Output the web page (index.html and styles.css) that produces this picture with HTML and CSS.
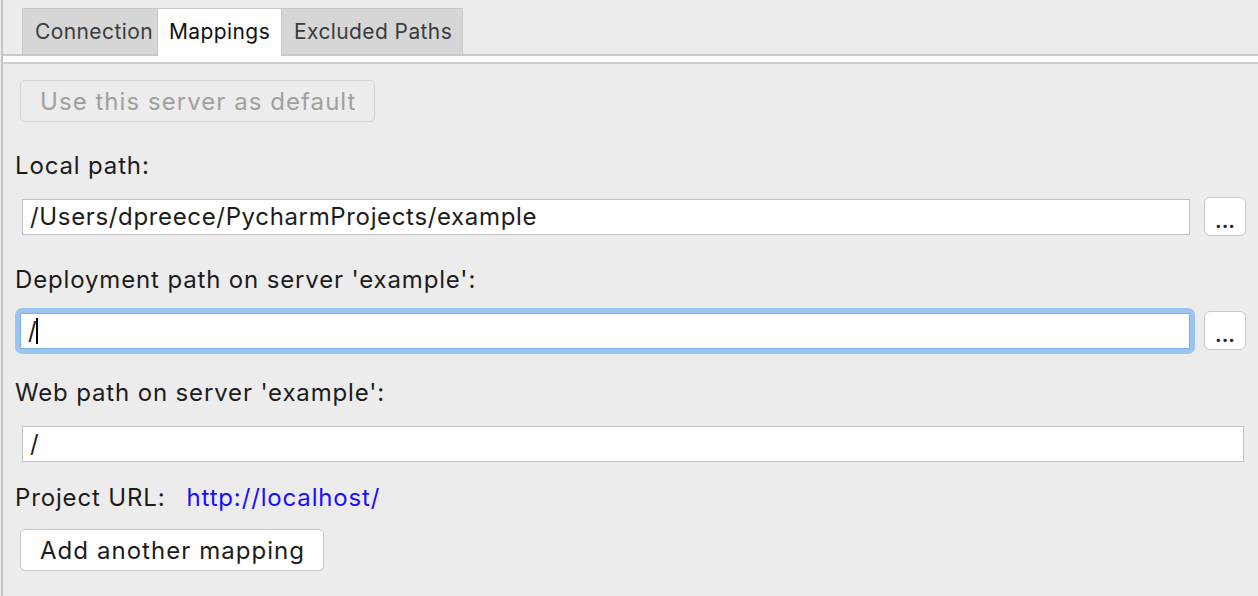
FILE: index.html
```html
<!DOCTYPE html>
<html>
<head>
<meta charset="utf-8">
<link rel="stylesheet" href="styles.css">
</head>
<body>
<div class="panel">
  <div class="tabs">
    <div class="tab tab-connection">Connection</div>
    <div class="tab tab-mappings active">Mappings</div>
    <div class="tab tab-excluded">Excluded Paths</div>
  </div>
  <div class="tab-rule"></div>
  <div class="content">
    <button class="btn disabled">Use this server as default</button>
    <div class="label">Local path:</div>
    <div class="row">
      <div class="field">/Users/dpreece/PycharmProjects/example</div>
      <button class="browse">...</button>
    </div>
    <div class="label">Deployment path on server 'example':</div>
    <div class="row">
      <div class="focus-ring"><div class="field focused">/<span class="caret"></span></div></div>
      <button class="browse">...</button>
    </div>
    <div class="label label-tight">Web path on server 'example':</div>
    <div class="row">
      <div class="field wide">/</div>
    </div>
    <div class="url-row">
      <span class="url-label">Project URL:</span>
      <a class="link" href="#">http://localhost/</a>
    </div>
    <button class="btn add">Add another mapping</button>
  </div>
</div>
</body>
</html>
```
FILE: styles.css
```css
html, body {
  margin: 0;
  padding: 0;
  background: #ececec;
  height: 100%;
}
body {
  font-family: Inter, "Liberation Sans", sans-serif;
  font-size: 24px;
  letter-spacing: 0.85px;
  color: #1c1c1c;
}
.panel {
  border-left: 2px solid #c6c6c6;
  margin-left: 1px;
  height: 596px;
  box-sizing: border-box;
}
.tabs {
  display: flex;
  padding-left: 19px;
  padding-top: 8px;
}
.tab {
  height: 46px;
  box-sizing: border-box;
  padding: 0 0 0 12px;
  line-height: 46px;
  background: #d6d6d6;
  border-top: 1px solid #c8c8c8;
  border-left: 1px solid #c8c8c8;
  color: #3b3b3b;
  font-size: 21px;
  letter-spacing: 0.4px;
  white-space: nowrap;
}
.tab-connection { width: 135px; }
.tab-mappings { width: 124px; padding-left: 11px; }
.tab-excluded { width: 182px; }
.tab:last-child {
  border-right: 1px solid #c8c8c8;
}
.tab.active {
  background: #ffffff;
  color: #111;
  height: 48px;
  margin-bottom: -2px;
  position: relative;
  z-index: 1;
}
.tab-rule {
  height: 6px;
  background: #fff;
  border-top: 2px solid #c9c9c9;
  border-bottom: 2px solid #cfcfcf;
}
.content {
  padding: 16px 12px 0 12px;
  display: flex;
  flex-direction: column;
  align-items: flex-start;
}
.btn {
  font-family: inherit;
  font-size: 24px;
  letter-spacing: 1.05px;
  height: 42px;
  padding: 0 18px 0 19px;
  margin-left: 5px;
  background: #fff;
  border: 1px solid #c8c8c8;
  border-radius: 5px;
  color: #1c1c1c;
}
.btn.disabled {
  background: #ececec;
  color: #a0a0a0;
  border-color: #d3d3d3;
}
.label {
  margin-top: 31px;
  height: 26px;
  line-height: 26px;
}
.label-tight {
  margin-top: 30px;
}
.row {
  display: flex;
  align-items: center;
  align-self: stretch;
  height: 39px;
  margin-top: 18px;
  gap: 14px;
}
.field {
  flex: 1;
  height: 36px;
  box-sizing: border-box;
  border: 1px solid #c2c2c2;
  background: #fff;
  padding: 0 7px;
  line-height: 34px;
  margin-left: 7px;
  letter-spacing: 0.65px;
}
.field.wide {
  margin-right: 2px;
}
.focus-ring {
  flex: 1;
  display: flex;
  padding: 5px;
  margin: 0 -5px 0 0;
  border-radius: 7px;
  background: #9cc4f3;
}
.focus-ring .field {
  margin-left: 0;
  border-color: #7eaee6;
}
.caret {
  display: inline-block;
  width: 2px;
  height: 26px;
  background: #000;
  vertical-align: -5px;
  margin-left: -1px;
}
.browse {
  width: 42px;
  height: 39px;
  background: #fff;
  border: 1px solid #c8c8c8;
  border-radius: 6px;
  font-family: inherit;
  font-size: 20px;
  letter-spacing: 0;
  font-weight: 700;
  padding: 0 0 4px;
  color: #222;
  line-height: 1;
  display: flex;
  align-items: flex-end;
  justify-content: center;
}
.url-row {
  margin-top: 22px;
  height: 26px;
  line-height: 26px;
  display: flex;
  gap: 21px;
}
.link {
  color: #1a0dff;
  text-decoration: none;
}
.add {
  margin-top: 18px;
}
```
